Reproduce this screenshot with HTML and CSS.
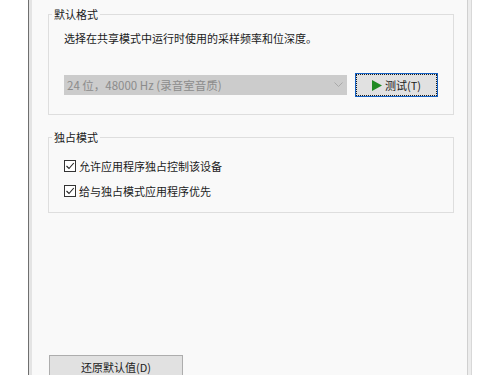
FILE: index.html
```html
<!DOCTYPE html>
<html lang="zh-CN">
<head>
    <meta charset="UTF-8">
    <title>高级</title>
    <link rel="stylesheet" href="styles.css">
</head>
<body>
    <div class="window">
        <div class="sheet">
            <fieldset class="group group-format">
                <legend>默认格式</legend>
                <p class="hint">选择在共享模式中运行时使用的采样频率和位深度。</p>
                <div class="format-row">
                    <div class="select">
                        <span>24 位，48000 Hz (录音室音质)</span>
                        <svg class="chevron" width="9" height="6" viewBox="0 0 9 6"><path d="M0.5 0.5 L4.5 4.5 L8.5 0.5" fill="none" stroke="#a9a9a9" stroke-width="1"/></svg>
                    </div>
                    <button class="btn btn-test">
                        <svg width="10" height="11" viewBox="0 0 10 11"><polygon points="0,0 10,5.5 0,11" fill="#1f8a22"/></svg>
                        <span>测试(T)</span>
                    </button>
                </div>
            </fieldset>

            <fieldset class="group group-exclusive">
                <legend>独占模式</legend>
                <label class="check">
                    <span class="box"><svg width="10" height="10" viewBox="0 0 10 10"><path d="M1.5 5 L4 7.5 L8.8 2" fill="none" stroke="#222" stroke-width="1.1"/></svg></span>
                    允许应用程序独占控制该设备
                </label>
                <label class="check">
                    <span class="box"><svg width="10" height="10" viewBox="0 0 10 10"><path d="M1.5 5 L4 7.5 L8.8 2" fill="none" stroke="#222" stroke-width="1.1"/></svg></span>
                    给与独占模式应用程序优先
                </label>
            </fieldset>

            <div class="footer">
                <button class="btn btn-reset">还原默认值(D)</button>
            </div>
        </div>
        <div class="edge"></div>
    </div>
</body>
</html>
```

FILE: styles.css
```css
body {
    margin: 0;
    height: 375px;
    overflow: hidden;
    background-color: #ffffff;
    font-family: "Noto Sans CJK SC", "Noto Sans", sans-serif;
    font-size: 11px;
    color: #1b1b1b;
}

.window {
    display: flex;
    margin-left: 28px;
    width: 443px;
    height: 375px;
    border-left: 1px solid #6f6f6f;
}

.sheet {
    flex: 1;
    background-color: #f9f9f9;
    border-left: 3px solid #e4e4e4;
    padding: 0 13px 0 16px;
}

.edge {
    width: 7px;
    background-color: #ececec;
    border-left: 1px solid #d0d0d0;
    border-right: 1px solid #d8d8d8;
}

.group {
    margin: 0;
    padding: 0 15px 17px 15px;
    border: 1px solid #dedede;
    min-width: 0;
}

.group legend {
    margin-left: -12px;
    padding: 0 2px;
    line-height: 14px;
}

.group-format {
    margin-top: 7px;
}

.hint {
    margin: 10px 0 0;
    line-height: 14px;
}

.format-row {
    display: flex;
    align-items: center;
    gap: 8px;
    margin-top: 28px;
}

.select {
    display: flex;
    align-items: center;
    justify-content: space-between;
    width: 283px;
    height: 20px;
    padding: 0 4px 0 3px;
    box-sizing: border-box;
    background-color: #cccccc;
    color: #8b8b8b;
    font-size: 11.5px;
}

.btn {
    font-family: inherit;
    font-size: 11px;
    color: #1b1b1b;
    background-color: #e1e1e1;
    border: 1px solid #adadad;
    padding: 0;
    box-sizing: border-box;
}

.btn-test {
    display: flex;
    align-items: center;
    justify-content: center;
    gap: 3px;
    width: 83px;
    height: 24px;
    border-color: #1461c4;
    outline: 1px dotted #1b1b1b;
    outline-offset: -2px;
}

.group-exclusive {
    margin-top: 15px;
    padding-bottom: 13px;
}

.check {
    display: flex;
    align-items: center;
    line-height: 16px;
    margin-top: 9px;
}

.check:first-of-type {
    margin-top: 14px;
}

.box {
    display: flex;
    align-items: center;
    justify-content: center;
    width: 12px;
    height: 12px;
    box-sizing: border-box;
    border: 1px solid #333333;
    background-color: #ffffff;
    margin-right: 3px;
}

.footer {
    margin-top: 142px;
    padding-left: 1px;
}

.btn-reset {
    width: 134px;
    height: 23px;
}
```
